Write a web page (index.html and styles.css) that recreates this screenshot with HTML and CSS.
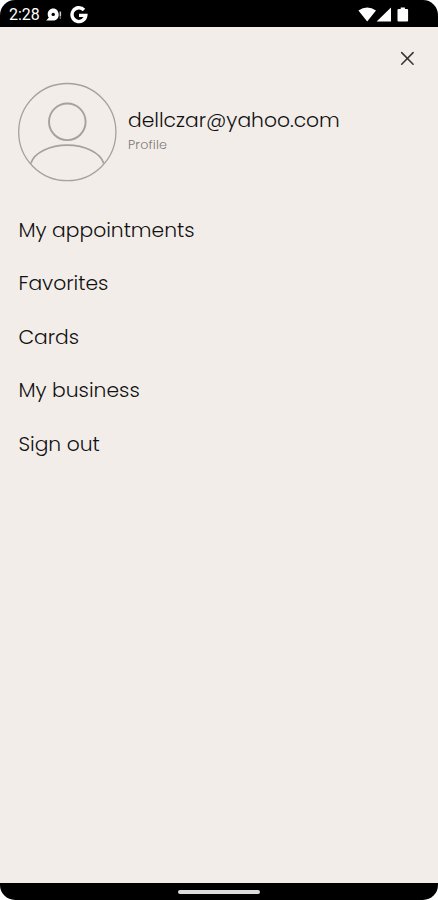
FILE: index.html
```html
<!DOCTYPE html>
<html lang="en">
<head>
<meta charset="UTF-8">
<meta name="viewport" content="width=device-width, initial-scale=1.0">
<title>Profile Menu</title>
<link rel="stylesheet" href="styles.css">
</head>
<body>

<div class="phone">
  <!-- Status bar -->
  <header class="status-bar">
    <span class="time">2:28</span>
    <svg class="chat-icon" width="16" height="14" viewBox="0 0 16 14">
      <path fill="#fff" d="M7.3.4C3.9.4 1.7 2.9 1.7 5.9c0 1.5.4 2.8 1.2 3.7L.2 12.6h7C10.8 12.4 12.7 10 12.7 6.7c0-3.7-2.2-6.3-5.4-6.3z"/>
      <circle cx="7.2" cy="6.4" r="1.7"/>
      <path fill="#ccc" d="M13.6 3.4h1.5v5h-1.5zM13.6 9.4h1.5v1.2h-1.5z"/>
    </svg>
    <svg class="google-icon" width="18" height="18" viewBox="0 0 18 18">
      <path fill="none" stroke="#fff" stroke-width="3.4" d="M14 4A6.9 6.9 0 1 0 15.8 9.4H9"/>
    </svg>
    <svg class="signal-icons" width="52" height="16" viewBox="0 0 52 16">
      <path fill="#fff" d="M.4 3.6Q9.2-2.6 18 3.6L9.2 14.6zM18.6 14.4 33 .6v13.8zM40.5 2.1h2.2V.5h4.2v1.6h2.2q1 0 1 1v10.3q0 1-1 1h-8.6q-1 0-1-1V3.1q0-1 1-1z"/>
    </svg>
  </header>

  <main class="menu">
    <button class="close-btn" aria-label="Close">
      <svg width="14" height="14" viewBox="0 0 14 14">
        <path fill="none" stroke="#333" stroke-width="1.5" stroke-linecap="round" d="M1.7 1.6l11.4 11.6M13.1 1.6L1.7 13.2"/>
      </svg>
    </button>

    <div class="profile">
      <svg class="avatar" width="100" height="100" viewBox="0 0 100 100">
        <g fill="none" stroke="#a5a19e">
          <circle cx="50.3" cy="50.1" r="48.6" stroke-width="1.3"/>
          <circle cx="50.3" cy="39.8" r="18.3" stroke-width="1.9"/>
          <path stroke-width="1.7" d="M13.8 81.6C17 70.5 33 63.2 50.3 63.2s33.2 7.3 36.5 18.4"/>
        </g>
      </svg>
      <div class="profile-info">
        <h1>dellczar@yahoo.com</h1>
        <p>Profile</p>
      </div>
    </div>

    <nav class="links">
      <a href="#">My appointments</a>
      <a href="#">Favorites</a>
      <a href="#">Cards</a>
      <a href="#">My business</a>
      <a href="#">Sign out</a>
    </nav>
  </main>

  <footer class="nav-bar">
    <div class="home-handle"></div>
  </footer>
</div>

</body>
</html>
```
FILE: styles.css
```css
:root{
  --bg:#f2ede9;
  --text:#111;
  --muted:#7d7977;
}
*{box-sizing:border-box;}
body{
  margin:0;
  background:#fff;
  color:var(--text);
  font-family:Poppins, Inter, "Open Sans", sans-serif;
}
.phone{
  display:flex;
  flex-direction:column;
  width:438px;
  height:900px;
  border-radius:15px;
  overflow:hidden;
  background:#000;
}

.status-bar{
  display:flex;
  align-items:center;
  height:27px;
  padding:2px 28px 0 9px;
  color:#fff;
}
.time{
  width:37px;
  font-family:Roboto, sans-serif;
  font-size:16px;
  line-height:24px;
}
.google-icon{margin-left:8px;}
.signal-icons{margin-left:auto;}

.menu{
  flex:1;
  background:var(--bg);
}
.close-btn{
  display:block;
  margin:24px 24px 0 auto;
  padding:0;
  border:none;
  background:none;
  cursor:pointer;
  height:14px;
}
.close-btn svg{display:block;}

.profile{
  display:flex;
  margin:17px 0 0 17px;
}
.profile-info{margin:23px 0 0 11px;}
.profile-info h1{
  margin:0;
  font-size:20.3px;
  font-weight:300;
  line-height:31px;
}
.profile-info p{
  margin:0;
  font-size:12.7px;
  font-weight:300;
  line-height:18px;
  letter-spacing:0.2px;
  color:var(--muted);
}

.links{
  display:flex;
  flex-direction:column;
  gap:23.5px;
  padding:32.6px 0 0 18.4px;
}
.links a{
  align-self:flex-start;
  color:var(--text);
  font-size:20.3px;
  font-weight:300;
  line-height:30px;
  text-decoration:none;
}

.nav-bar{
  display:flex;
  justify-content:center;
  height:17px;
  padding-top:7px;
}
.home-handle{
  width:82px;
  height:4px;
  border-radius:2px;
  background:#ddd;
}
```
